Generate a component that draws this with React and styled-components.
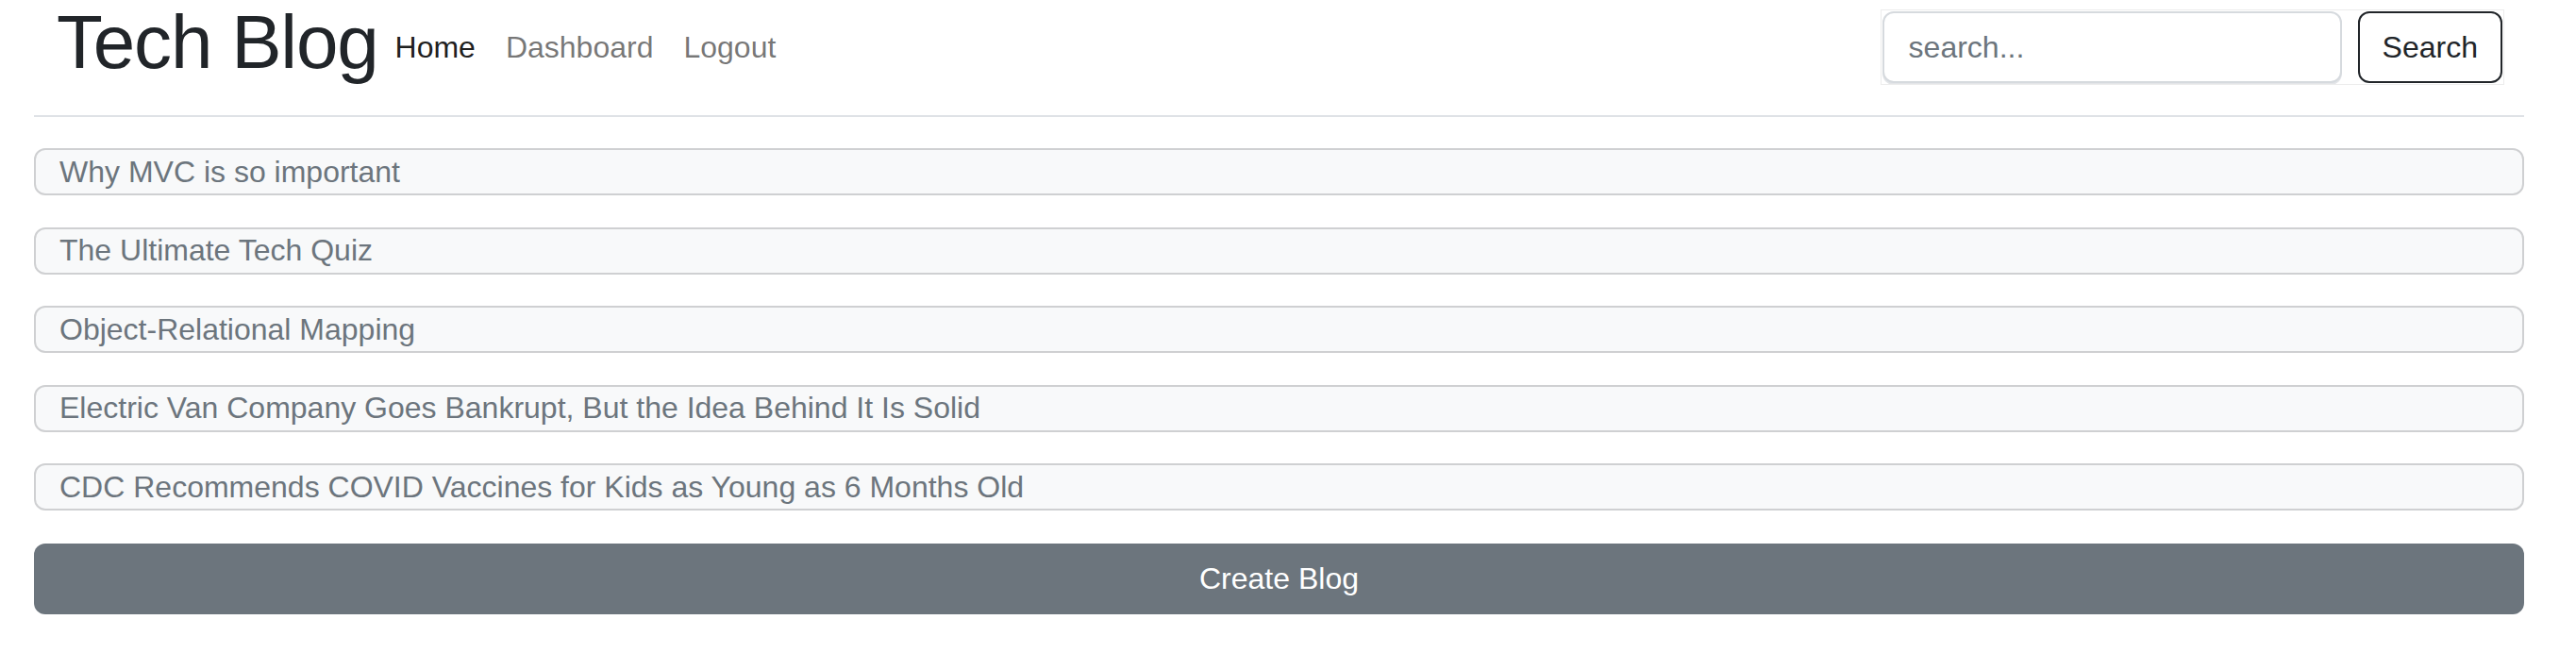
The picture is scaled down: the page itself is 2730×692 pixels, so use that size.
import styled, { createGlobalStyle } from 'styled-components';

const GlobalStyle = createGlobalStyle`
  body {
    margin: 0;
    background: #fff;
    font-family: 'Liberation Sans', Arial, sans-serif;
    color: #212529;
  }
  * { box-sizing: border-box; }
`;

const Page = styled.div`
  padding: 0 55px 0 36px;
`;

const Header = styled.header`
  display: flex;
  align-items: center;
  height: 100px;
  padding: 0 23px 0 24px;
`;

const Brand = styled.h1`
  margin: 0 2px 10px 0;
  font-size: 80px;
  line-height: 90px;
  font-weight: 400;
  letter-spacing: -1.2px;
  color: #212529;
`;

const Nav = styled.nav`
  display: flex;
  align-items: center;
`;

const NavLink = styled.a`
  padding: 0 16px;
  font-size: 32px;
  line-height: 48px;
  text-decoration: none;
  color: ${(p) => (p.$active ? 'rgba(0, 0, 0, 0.9)' : 'rgba(0, 0, 0, 0.55)')};
  cursor: pointer;
`;

const SearchForm = styled.form`
  display: flex;
  gap: 17px;
  margin-left: auto;
  outline: 1px solid #ececec;
  outline-offset: 1px;
`;

const SearchInput = styled.input`
  width: 487px;
  height: 76px;
  padding: 0 26px;
  border: 2px solid #d6dade;
  border-radius: 12px;
  font-family: inherit;
  font-size: 32px;
  color: #212529;
  box-shadow: 0 2px 0 #e3e5e8;
  &::placeholder {
    color: #6c757d;
  }
`;

const OutlineButton = styled.button`
  height: 76px;
  padding: 0 24px;
  border: 2px solid #212529;
  border-radius: 12px;
  background: #fff;
  font-family: inherit;
  font-size: 32px;
  color: #212529;
`;

const Divider = styled.hr`
  margin: 22px 0 0;
  border: 0;
  height: 2px;
  background: #dfe2e6;
`;

const PostList = styled.ul`
  list-style: none;
  margin: 33px 0 0;
  padding: 0;
  display: flex;
  flex-direction: column;
  gap: 33.5px;
`;

const PostItem = styled.li`
  display: flex;
  align-items: center;
  height: 50px;
  padding: 0 25px;
  border: 2px solid #cfd0d2;
  border-radius: 12px;
  background: #f8f9fa;
  font-size: 32px;
  color: #6c757d;
`;

const CreateButton = styled.button`
  display: block;
  width: 100%;
  height: 75px;
  margin-top: 35px;
  border: 0;
  border-radius: 12px;
  background: #6c757d;
  color: #fff;
  font-family: inherit;
  font-size: 32px;
`;

const posts = [
  'Why MVC is so important',
  'The Ultimate Tech Quiz',
  'Object-Relational Mapping',
  'Electric Van Company Goes Bankrupt, But the Idea Behind It Is Solid',
  'CDC Recommends COVID Vaccines for Kids as Young as 6 Months Old',
];

export default function App() {
  return (
    <>
      <GlobalStyle />
      <Page>
        <Header>
          <Brand>Tech Blog</Brand>
          <Nav>
            <NavLink $active>Home</NavLink>
            <NavLink>Dashboard</NavLink>
            <NavLink>Logout</NavLink>
          </Nav>
          <SearchForm onSubmit={(e) => e.preventDefault()}>
            <SearchInput placeholder="search..." />
            <OutlineButton type="submit">Search</OutlineButton>
          </SearchForm>
        </Header>
        <Divider />
        <PostList>
          {posts.map((title) => (
            <PostItem key={title}>{title}</PostItem>
          ))}
        </PostList>
        <CreateButton>Create Blog</CreateButton>
      </Page>
    </>
  );
}
